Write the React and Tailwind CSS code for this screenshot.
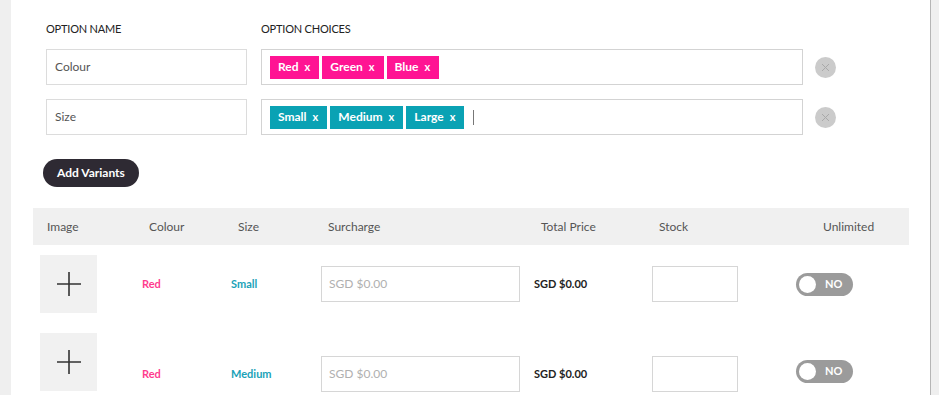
const pink = "bg-[#ff1493]";
const teal = "bg-[#0aa2b4]";

const Tag = ({ label, color }) => (
  <span className={`${color} h-[23px] flex items-center pl-[8px] pr-[9px] text-white text-[12px] font-bold`}>
    {label}
    <span className="ml-[6px] text-[11px]">x</span>
  </span>
);

const RemoveBtn = () => (
  <div className="w-[21px] h-[21px] rounded-full bg-[#cbcbcb] flex items-center justify-center">
    <svg width="9" height="9" viewBox="0 0 9 9">
      <path d="M1 1L8 8M8 1L1 8" stroke="#a9a9a9" strokeWidth="1" />
    </svg>
  </div>
);

const OptionRow = ({ name, tags, color, cursor }) => (
  <div className="flex items-center">
    <div className="w-[201px] h-[36px] border border-[#dcdcdc] flex items-center pl-[8px] text-[12px] text-[#555]">
      {name}
    </div>
    <div className="ml-[14px] w-[542px] h-[36px] border border-[#d3d3d3] flex items-center pl-[8px] gap-[3px]">
      {tags.map((t) => (
        <Tag key={t} label={t} color={color} />
      ))}
      {cursor ? <span className="ml-[6px] w-px h-[15px] bg-[#777]" /> : null}
    </div>
    <div className="ml-[12px]">
      <RemoveBtn />
    </div>
  </div>
);

const Plus = () => (
  <svg width="24" height="24" viewBox="0 0 24 24">
    <path d="M12 0V24M0 12H24" stroke="#333" strokeWidth="1.6" />
  </svg>
);

const Toggle = () => (
  <div className="w-[57px] h-[23px] rounded-full bg-[#9b9b9b] flex items-center pl-[3px]">
    <span className="w-[17px] h-[17px] rounded-full bg-white" />
    <span className="ml-[9px] text-white text-[11px] font-bold">NO</span>
  </div>
);

const cols = "grid grid-cols-[102px_89px_90px_213px_118px_144px_106px] pl-[7px]";

const VariantRow = ({ colour, size, tall }) => (
  <div className={`${cols} ${tall ? "h-[102px]" : "h-[78px]"} items-center`}>
    <div className={`${tall ? "self-start mt-[10px]" : ""} w-[57px] h-[58px] bg-[#f1f1f1] flex items-center justify-center`}>
      <Plus />
    </div>
    <div className="text-[11px] font-bold text-[#ff3c8e]">{colour}</div>
    <div className="text-[11px] font-bold text-[#1aa2b8]">{size}</div>
    <div className="w-[199px] h-[36px] border border-[#d6d6d6] flex items-center pl-[7px] text-[12px] text-[#b0b0b0]">
      SGD $0.00
    </div>
    <div className="text-[11px] font-bold text-[#222]">SGD $0.00</div>
    <div className="w-[86px] h-[36px] border border-[#d6d6d6]" />
    <div className={tall ? "-mt-[6px]" : ""}>
      <Toggle />
    </div>
  </div>
);

export default function App() {
  return (
    <div className="w-[939px] h-[395px] flex overflow-hidden bg-white" style={{ fontFamily: "Lato, 'Open Sans', sans-serif" }}>
      <div className="w-[11px] bg-[#efefef]" />
      <div className="w-[919px] pl-[22px] pt-[22px]">
        <div className="ml-[13px]">
          <div className="flex text-[11px] text-[#222] uppercase h-[14px] items-center tracking-[-0.2px]">
            <span className="w-[215px]">Option Name</span>
            <span>Option Choices</span>
          </div>
          <div className="mt-[13px] flex flex-col gap-[14px]">
            <OptionRow name="Colour" tags={["Red", "Green", "Blue"]} color={pink} />
            <OptionRow name="Size" tags={["Small", "Medium", "Large"]} color={teal} cursor />
          </div>
        </div>
        <button className="mt-[24px] ml-[10px] h-[28px] px-[14px] rounded-full bg-[#2e2a33] text-white text-[12px] font-bold">
          Add Variants
        </button>
        <div className="mt-[21px] w-[876px]">
          <div className="h-[37px] bg-[#f0f0f0] grid grid-cols-[102px_89px_90px_213px_118px_144px_106px] pl-[14px] items-center text-[12px] text-[#555]">
            <span>Image</span>
            <span>Colour</span>
            <span>Size</span>
            <span>Surcharge</span>
            <span>Total Price</span>
            <span>Stock</span>
            <span className="pl-[20px]">Unlimited</span>
          </div>
          <VariantRow colour="Red" size="Small" />
          <VariantRow colour="Red" size="Medium" tall />
        </div>
      </div>
      <div className="flex-1 border-l border-[#b5b5b5] bg-[#efefef]" />
    </div>
  );
}
